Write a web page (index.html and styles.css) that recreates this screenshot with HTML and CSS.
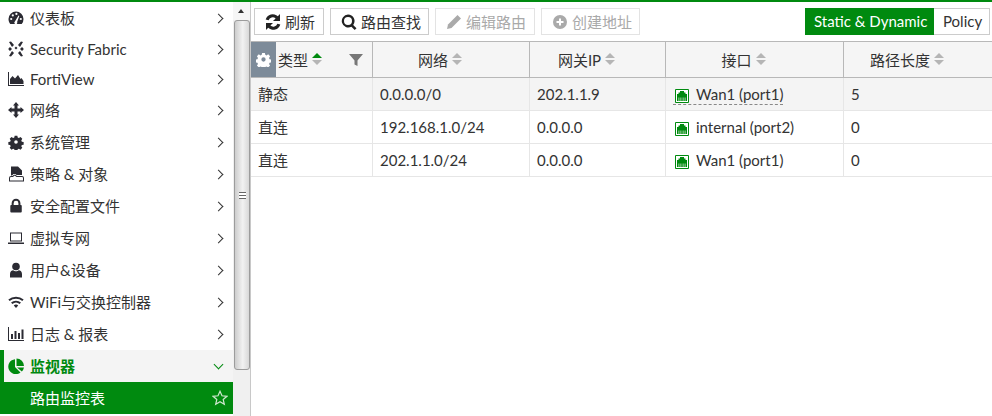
FILE: index.html
```html
<!DOCTYPE html>
<html lang="zh">
<head>
<meta charset="utf-8">
<title>路由监控表</title>
<link rel="stylesheet" href="styles.css">
</head>
<body>
<div class="app">
  <nav class="sidebar">
    <a class="item"><svg class="ico" viewBox="0 0 16 16"><path d="M8 1.500A7.500 7.500 0 0 0 .5 9c0 2 .7 3.700 1.800 5h11.400a7.400 7.400 0 0 0 1.800-5A7.500 7.500 0 0 0 8 1.500z"/><g fill="#fff"><circle cx="3.200" cy="9" r="1.100"/><circle cx="4.800" cy="5.400" r="1.100"/><circle cx="8.400" cy="3.900" r="1.100"/><circle cx="12.800" cy="9" r="1.100"/><path d="M6.900 11.500 10.500 5.500l.8.400-2.200 6a1.500 1.500 0 1 1-2.200-.4z"/></g></svg><span class="label">仪表板</span><i class="chev"></i></a>
    <a class="item latin"><svg class="ico" viewBox="0 0 16 16"><path d="M1 1l2-.5 3 3.500-2 2zM15 1l-2-.5-3 3.500 2 2zM1 15l2 .5 3-3.500-2-2zM15 15l-2 .5-3-3.500 2-2z M6.500 7 8 5.500 9.500 7 8 8.500z M.5 7.500 2 6l2 2-2 2-1.500-1.500zM15.500 7.500 14 6l-2 2 2 2 1.500-1.500z"/></svg><span class="label">Security Fabric</span><i class="chev"></i></a>
    <a class="item latin"><svg class="ico" viewBox="0 0 16 16"><path d="M0 1h1v13h15v1H0z"/><path d="M2 13V8l2.500-3 2.500 2.500L10 4l2.500 4 1-1 2 3v3z"/></svg><span class="label">FortiView</span><i class="chev"></i></a>
    <a class="item"><svg class="ico" viewBox="0 0 16 16"><path d="M8 0l3 3.500H9.500v3h3V5L16 8l-3.500 3V9.500h-3v3H11L8 16l-3-3.500h1.500v-3h-3V11L0 8l3.500-3v1.500h3v-3H5z"/></svg><span class="label">网络</span><i class="chev"></i></a>
    <a class="item"><svg class="ico" viewBox="0 0 16 16"><path fill-rule="evenodd" d="M6.500 1h3l.4 2 1.300.6 1.800-1.100 2 2-1.100 1.800.6 1.300 2 .4v3l-2 .4-.6 1.300 1.100 1.800-2 2-1.800-1.100-1.300.6-.4 2h-3l-.4-2-1.300-.6-1.800 1.100-2-2 1.100-1.800-.6-1.300-2-.4v-3l2-.4.6-1.300-1.100-1.800 2-2 1.800 1.100 1.300-.6zM8 6a2 2 0 1 0 0 4 2 2 0 0 0 0-4z" transform="translate(.8 .8) scale(.9)"/></svg><span class="label">系统管理</span><i class="chev"></i></a>
    <a class="item"><svg class="ico" viewBox="0 0 16 16"><path d="M3 .5h7l4 4V9H8.500L7.500 8H5.500L4 9.500H3z"/><path fill-rule="evenodd" d="M1 15.500V12a2 2 0 0 1 2-2h1.500L6 8.800h1.500L9 10h5a2 2 0 0 1 2 2v3.500zm1-1h13V12a1 1 0 0 0-1-1H8.500L7 9.800H6.400L5 11H3a1 1 0 0 0-1 1z"/></svg><span class="label">策略 &amp; 对象</span><i class="chev"></i></a>
    <a class="item"><svg class="ico" viewBox="0 0 16 16"><path fill-rule="evenodd" d="M3 7V5a5 5 0 0 1 10 0v2h.5a1 1 0 0 1 1 1v6.500a1 1 0 0 1-1 1h-11a1 1 0 0 1-1-1V8a1 1 0 0 1 1-1zm2.300 0h5.400V5a2.700 2.700 0 0 0-5.400 0z" transform="translate(1 .8) scale(.88)"/></svg><span class="label">安全配置文件</span><i class="chev"></i></a>
    <a class="item"><svg class="ico" viewBox="0 0 16 16"><path fill-rule="evenodd" d="M2 2.500h12v9H2zM3 3.500v7h10v-7zM0 12.500h16v1.500H0z"/></svg><span class="label">虚拟专网</span><i class="chev"></i></a>
    <a class="item"><svg class="ico" viewBox="0 0 16 16"><circle cx="8" cy="4.500" r="3.800"/><path d="M2 15.500v-3.500c0-2.200 1.500-3.800 3.300-3.800C6 9 7 9.300 8 9.300S10 9 10.700 8.200c1.800 0 3.300 1.600 3.300 3.800v3.500z"/></svg><span class="label">用户&amp;设备</span><i class="chev"></i></a>
    <a class="item"><svg class="ico" viewBox="0 0 16 16"><path class="arc" d="M1 6.300a10.500 10.500 0 0 1 14 0"/><path class="arc" d="M3.700 9.300a6.500 6.500 0 0 1 8.600 0"/><path d="M8 10.500a2.800 2.800 0 0 1 2.200 1L8 14l-2.200-2.500a2.800 2.800 0 0 1 2.200-1z"/></svg><span class="label">WiFi与交换控制器</span><i class="chev"></i></a>
    <a class="item"><svg class="ico" viewBox="0 0 16 16"><path d="M0 1h1v13h15v1H0z"/><path d="M3 8h2v5H3zM6.500 5h2v8h-2zM10 7h2v6h-2zM13.500 3.500h2V13h-2z"/></svg><span class="label">日志 &amp; 报表</span><i class="chev"></i></a>
    <a class="item open"><svg class="ico" viewBox="0 0 16 16"><path d="M7 1.200V9l5.500 5.500A7.500 7.500 0 1 1 7 1.200z"/><path d="M8.500 0.500A7.500 7.500 0 0 1 16 8H8.500z"/><path d="M9 9.500h7a7.400 7.400 0 0 1-2.200 4z"/></svg><span class="label">监视器</span><i class="chev down"></i></a>
    <a class="item sub"><span class="label">路由监控表</span><svg class="star" viewBox="0 0 16 16"><path d="M8 1.300l2 4.500 4.900.5-3.700 3.200 1.100 4.800L8 11.800l-4.300 2.500 1.100-4.800L1.100 6.300 6 5.800z"/></svg></a>
  </nav>
  <div class="scrollbar">
    <div class="sb-up"></div>
    <div class="sb-thumb"><div class="sb-grip"></div></div>
    <div class="sb-rest"></div>
  </div>
  <main class="main">
    <div class="toolbar">
      <button class="btn"><svg class="bico" viewBox="0 0 16 16"><path d="M15 0v7H8l2.600-2.600A4.300 4.300 0 0 0 3.600 6.300L.7 5.500A7.300 7.300 0 0 1 12.800 2.200zM1 16V9h7l-2.600 2.600a4.300 4.300 0 0 0 7-1.900l2.900.8A7.300 7.300 0 0 1 3.200 13.800z"/></svg>刷新</button>
      <button class="btn tight"><svg class="bico" viewBox="0 0 16 16"><path fill-rule="evenodd" d="M7 .5a6.500 6.500 0 0 1 5.200 10.400l3.300 3.300-1.800 1.800-3.300-3.300A6.500 6.500 0 1 1 7 .5zm0 2.500a4 4 0 1 0 0 8 4 4 0 0 0 0-8z"/></svg>路由查找</button>
      <button class="btn off"><svg class="bico" viewBox="0 0 16 16"><path d="M11.500 1 15 4.500 5.500 14 1 15l1-4.500z"/></svg>编辑路由</button>
      <button class="btn off tight"><svg class="bico" viewBox="0 0 16 16"><path fill-rule="evenodd" d="M8 1a7 7 0 1 1 0 14A7 7 0 0 1 8 1zM7 4.500V7H4.500v2H7v2.500h2V9h2.500V7H9V4.500z"/></svg>创建地址</button>
      <div class="seg"><span class="seg-on">Static &amp; Dynamic</span><span class="seg-off">Policy</span></div>
    </div>
    <table class="grid">
      <colgroup><col class="c1"><col class="c2"><col class="c3"><col class="c4"><col class="c5"></colgroup>
      <thead>
        <tr>
          <th class="first"><div class="th-first"><span class="gear"><svg viewBox="0 0 16 16"><path fill-rule="evenodd" d="M6.500 1h3l.4 2 1.300.6 1.800-1.100 2 2-1.100 1.800.6 1.300 2 .4v3l-2 .4-.6 1.300 1.100 1.800-2 2-1.800-1.100-1.300.6-.4 2h-3l-.4-2-1.300-.6-1.800 1.100-2-2 1.100-1.800-.6-1.300-2-.4v-3l2-.4.6-1.300-1.100-1.800 2-2 1.800 1.100 1.300-.6zM8 5.700a2.300 2.300 0 1 0 0 4.600 2.300 2.300 0 0 0 0-4.600z"/></svg></span><span class="th-t">类型</span><span class="sort asc"><b></b><b></b></span><svg class="filter" viewBox="0 0 14 14"><path d="M0 1h14L8.500 7.500V13l-3-1.500v-4z"/></svg></div></th>
          <th>网络<span class="sort"><b></b><b></b></span></th>
          <th>网关IP<span class="sort"><b></b><b></b></span></th>
          <th>接口<span class="sort"><b></b><b></b></span></th>
          <th>路径长度<span class="sort"><b></b><b></b></span></th>
        </tr>
      </thead>
      <tbody>
        <tr class="sel">
          <td>静态</td><td>0.0.0.0/0</td><td>202.1.1.9</td>
          <td><span class="port dashed"><svg class="pico" viewBox="0 0 14 14"><path fill="#fff" stroke="#008a0f" d="M.5.500h13v13H.5z"/><path fill="#008a0f" d="M2 12V5h1.500V3.500H5V2h4v1.500h1.500V5H12v7z"/><path fill="#cfe8d0" d="M3.500 8.500h.8V12h-.8zM5.500 8.500h.8V12h-.8zM7.700 8.500h.8V12h-.8zM9.700 8.500h.8V12h-.8z"/></svg>Wan1 (port1)</span></td>
          <td>5</td>
        </tr>
        <tr>
          <td>直连</td><td>192.168.1.0/24</td><td>0.0.0.0</td>
          <td><span class="port"><svg class="pico" viewBox="0 0 14 14"><path fill="#fff" stroke="#008a0f" d="M.5.500h13v13H.5z"/><path fill="#008a0f" d="M2 12V5h1.500V3.500H5V2h4v1.500h1.500V5H12v7z"/><path fill="#cfe8d0" d="M3.500 8.500h.8V12h-.8zM5.500 8.500h.8V12h-.8zM7.700 8.500h.8V12h-.8zM9.700 8.500h.8V12h-.8z"/></svg>internal (port2)</span></td>
          <td>0</td>
        </tr>
        <tr>
          <td>直连</td><td>202.1.1.0/24</td><td>0.0.0.0</td>
          <td><span class="port"><svg class="pico" viewBox="0 0 14 14"><path fill="#fff" stroke="#008a0f" d="M.5.500h13v13H.5z"/><path fill="#008a0f" d="M2 12V5h1.500V3.500H5V2h4v1.500h1.500V5H12v7z"/><path fill="#cfe8d0" d="M3.500 8.500h.8V12h-.8zM5.500 8.500h.8V12h-.8zM7.700 8.500h.8V12h-.8zM9.700 8.500h.8V12h-.8z"/></svg>Wan1 (port1)</span></td>
          <td>0</td>
        </tr>
      </tbody>
    </table>
  </main>
</div>
</body>
</html>
```
FILE: styles.css
```css
* { box-sizing: border-box; }
html, body { margin: 0; height: 100%; overflow: hidden; }
body {
  background: #fff;
  color: #333;
  font: 15px/20px Lato, "Noto Sans CJK SC", sans-serif;
}
.app {
  display: flex;
  height: 416px;
  border-top: 2px solid #008a0f;
}
.sidebar {
  width: 233px;
  flex: none;
}
.item {
  display: flex;
  align-items: center;
  height: 32px;
  padding: 0 9px 0 8px;
  color: #333;
}
.item.latin { height: 30px; }
.ico {
  width: 16px;
  height: 16px;
  flex: none;
  fill: #2b2b33;
  margin-right: 6px;
}
.arc { fill: none; stroke: #2b2b33; stroke-width: 2; }
.label { flex: 1; white-space: nowrap; }
.chev {
  width: 7px;
  height: 7px;
  flex: none;
  border-top: 1.500px solid #333;
  border-right: 1.500px solid #333;
  transform: rotate(45deg);
  margin-right: 2px;
}
.chev.down {
  border-color: #008a0f;
  transform: translateY(-2px) rotate(135deg);
}
.open {
  background: #f4f4f4;
  border-left: 4px solid #008a0f;
  padding-left: 4px;
  color: #008a0f;
  font-weight: 700;
}
.open .ico { fill: #008a0f; }
.sub {
  background: #008a0f;
  color: #fff;
  padding-left: 30px;
  padding-right: 5px;
}
.star {
  width: 16px;
  height: 16px;
  flex: none;
  fill: none;
  stroke: #cfe8d0;
  stroke-width: 1.200;
}
.scrollbar {
  width: 18px;
  flex: none;
  display: flex;
  flex-direction: column;
  align-items: flex-end;
  background: #f0f0f0;
  border-right: 1px solid #c8c8c8;
}
.sb-up {
  width: 100%;
  height: 18px;
  background: #f6f6f6;
  position: relative;
}
.sb-up::after {
  content: "";
  position: absolute;
  left: 5px;
  top: 7px;
  border: 3.500px solid transparent;
  border-top: 0;
  border-bottom: 4px solid #333;
}
.sb-thumb {
  width: 16px;
  height: 350px;
  flex: none;
  display: flex;
  align-items: center;
  justify-content: center;
  background: linear-gradient(90deg, #cdcdcd, #f2f2f2 55%, #d8d8d8);
  border: 1px solid #9c9c9c;
  border-radius: 3px;
}
.sb-grip {
  width: 7px;
  height: 7px;
  border-top: 1px solid #666;
  border-bottom: 1px solid #666;
  background: linear-gradient(#fff 0 2px, #666 2px 3px, #fff 3px);
}
.sb-rest { flex: 1; }
.main {
  flex: 1;
  min-width: 0;
}
.toolbar {
  display: flex;
  align-items: center;
  gap: 6px;
  height: 39px;
  padding: 0 2px 0 3px;
}
.btn {
  display: flex;
  align-items: center;
  height: 27px;
  padding: 0 8px 0 10px;
  border: 1px solid #ccc;
  background: #fff;
  color: #333;
  font: inherit;
  white-space: nowrap;
}
.btn.tight { padding-right: 7px; }
.btn.off { color: #a9a9a9; border-color: #e3e3e3; }
.bico { width: 16px; height: 16px; fill: #222; margin-right: 4px; flex: none; }
.off .bico { fill: #aaa; }
.seg {
  margin-left: auto;
  display: flex;
  height: 27px;
  line-height: 25px;
}
.seg-on {
  background: #008a0f;
  color: #fff;
  padding: 1px 9px;
  width: 129px;
  white-space: nowrap;
}
.seg-off {
  border: 1px solid #ccc;
  border-left: 0;
  padding: 0 9px;
  width: 56px;
}
.grid {
  width: 741px;
  table-layout: fixed;
  border-collapse: separate;
  border-spacing: 0;
}
.c1 { width: 122px; }
.c2 { width: 157px; }
.c3 { width: 136px; }
.c4 { width: 178px; }
.c5 { width: 148px; }
th {
  height: 37px;
  padding: 1px 22px 0 0;
  background: #f5f5f5;
  border: 1px solid #b8b8b8;
  border-width: 1px 1px 1px 0;
  font-weight: 400;
  text-align: center;
  white-space: nowrap;
}
th.first { padding: 0; }
th:last-child { border-right: 0; }
.th-first {
  display: flex;
  align-items: center;
  height: 35px;
  text-align: left;
}
.gear {
  width: 25px;
  height: 100%;
  flex: none;
  display: flex;
  align-items: center;
  justify-content: center;
  background: #7d8b99;
  margin-right: 2px;
}
.gear svg { width: 15px; height: 15px; fill: #fff; }
.th-t { padding-top: 1px; }
.sort {
  display: inline-flex;
  flex-direction: column;
  gap: 2px;
  width: 10px;
  margin: 3px 0 0 4px;
  vertical-align: top;
}
.th-first .sort { margin-top: 0; margin-bottom: 1px; }
.sort b {
  width: 0;
  height: 0;
  border-left: 5px solid transparent;
  border-right: 5px solid transparent;
  border-bottom: 5px solid #b5b5b5;
}
.sort b + b {
  border-bottom: 0;
  border-top: 5px solid #b5b5b5;
}
.sort.asc b:first-child { border-bottom-color: #008a0f; }
.filter {
  width: 14px;
  height: 14px;
  fill: #777;
  margin-left: auto;
  margin-right: 9px;
}
td {
  height: 33px;
  padding: 6px 7px 0;
  vertical-align: top;
  border-right: 1px solid #e6e6e6;
  border-bottom: 1px solid #e6e6e6;
  white-space: nowrap;
}
td:last-child { border-right: 0; }
.sel td { background: #f4f4f4; }
.port {
  display: flex;
  align-items: flex-start;
  height: 21px;
  width: max-content;
}
.port.dashed { border-bottom: 1px dashed #888; }
.pico { width: 14px; height: 14px; margin: 5px 7px 0 2px; flex: none; }
```
